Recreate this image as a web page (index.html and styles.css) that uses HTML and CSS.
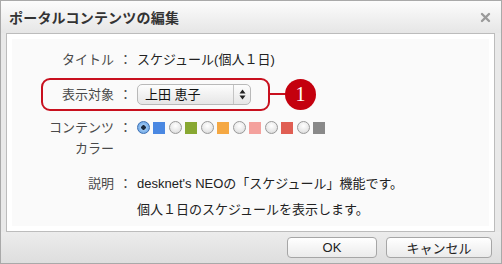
FILE: index.html
```html
<!DOCTYPE html>
<html lang="ja">
<head>
    <meta charset="UTF-8">
    <title>ポータルコンテンツの編集</title>
    <link rel="stylesheet" href="styles.css">
</head>
<body>
    <div class="dialog">
        <div class="dialog_head">
            <h1>ポータルコンテンツの編集</h1>
            <svg class="close_x" width="11" height="11" viewBox="0 0 11 11">
                <path d="M2 2 L9 9 M9 2 L2 9" stroke="#9a9a9a" stroke-width="2.4" stroke-linecap="round"/>
            </svg>
        </div>
        <div class="panel">
            <div class="content">
                <div class="row row_title">
                    <span class="label">タイトル</span>
                    <span class="colon">：</span>
                    <span class="value">スケジュール(個人１日)</span>
                </div>
                <div class="row row_target">
                    <span class="label">表示対象</span>
                    <span class="colon">：</span>
                    <span class="value">
                        <span class="select">
                            <span class="select_text">上田 恵子</span>
                            <span class="select_arrows">
                                <svg width="7" height="11" viewBox="0 0 7 11">
                                    <path d="M3.5 0.5 L6.5 4.5 L0.5 4.5 Z M3.5 10.5 L6.5 6.5 L0.5 6.5 Z" fill="#222"/>
                                </svg>
                            </span>
                        </span>
                    </span>
                    <span class="highlight"></span>
                    <span class="connector"></span>
                    <span class="badge">1</span>
                </div>
                <div class="row row_colors">
                    <span class="label">コンテンツ<br>カラー</span>
                    <span class="colon">：</span>
                    <span class="value colors">
                        <span class="radio checked"></span><span class="swatch" style="background:#4a88e2"></span>
                        <span class="radio"></span><span class="swatch" style="background:#88a832"></span>
                        <span class="radio"></span><span class="swatch" style="background:#f5a843"></span>
                        <span class="radio"></span><span class="swatch" style="background:#f4a19d"></span>
                        <span class="radio"></span><span class="swatch" style="background:#e05e53"></span>
                        <span class="radio"></span><span class="swatch" style="background:#898989"></span>
                    </span>
                </div>
                <div class="row row_desc">
                    <span class="label">説明</span>
                    <span class="colon">：</span>
                    <span class="value">desknet's NEOの「スケジュール」機能です。<br>個人１日のスケジュールを表示します。</span>
                </div>
            </div>
        </div>
        <div class="dialog_foot">
            <button class="btn btn_ok">OK</button>
            <button class="btn btn_cancel">キャンセル</button>
        </div>
    </div>
</body>
</html>
```

FILE: styles.css
```css
html, body {
    margin: 0;
    padding: 0;
    background: #fff;
}
body {
    font-family: "Liberation Sans", "Noto Sans CJK JP", sans-serif;
    font-size: 13px;
    color: #222;
}
.dialog {
    box-sizing: border-box;
    width: 502px;
    height: 264px;
    border: 1px solid #a9a9a9;
    background: #e9e9e9;
    display: flex;
    flex-direction: column;
}
.dialog_head {
    position: relative;
    height: 32px;
    background: linear-gradient(#fcfcfc, #e6e6e6);
    display: flex;
    align-items: center;
    padding-left: 8px;
}
.dialog_head h1 {
    margin: 0;
    font-size: 14px;
    font-weight: bold;
    color: #333;
    letter-spacing: 0.2px;
}
.close_x {
    position: absolute;
    right: 10px;
    top: 11px;
}
.panel {
    margin: 0 6px 0 5px;
    height: 199px;
    box-sizing: border-box;
    border: 1px solid #bcbcbc;
    background: #fff;
    padding: 5px;
}
.content {
    background: #fafafa;
    height: 100%;
    padding-top: 11px;
    box-sizing: border-box;
}
.row {
    display: grid;
    grid-template-columns: 102px 23px 1fr;
    align-items: start;
    line-height: 20px;
}
.label {
    text-align: right;
    color: #4a4a4a;
}
.colon {
    text-align: center;
    color: #4a4a4a;
}
.value {
    color: #222;
}
.row_target {
    position: relative;
    margin-top: 8px;
    height: 33px;
    align-items: center;
}
.select {
    box-sizing: border-box;
    display: flex;
    width: 114px;
    height: 21px;
    border: 1px solid #b9b9b9;
    border-radius: 5px;
    background: linear-gradient(#fdfdfd, #e6e6e6);
    line-height: 19px;
}
.select_text {
    flex: 1;
    padding-left: 7px;
    color: #111;
}
.select_arrows {
    width: 16px;
    border-left: 1px solid #c4c4c4;
    display: flex;
    align-items: center;
    justify-content: center;
}
.highlight {
    position: absolute;
    left: 29px;
    top: 0;
    width: 229px;
    height: 33px;
    box-sizing: border-box;
    border: 2px solid #c8101e;
    border-radius: 9px;
}
.connector {
    position: absolute;
    left: 258px;
    top: 15px;
    width: 16px;
    height: 2px;
    background: #c8101e;
}
.badge {
    position: absolute;
    left: 273px;
    top: 1px;
    width: 31px;
    height: 31px;
    border-radius: 50%;
    background: #c4000e;
    color: #fff;
    font-family: "Liberation Serif", serif;
    font-size: 20px;
    line-height: 31px;
    text-align: center;
}
.row_colors {
    margin-top: 6px;
    line-height: 21px;
}
.colors {
    display: flex;
    align-items: center;
    height: 21px;
}
.radio {
    box-sizing: border-box;
    width: 13px;
    height: 13px;
    border-radius: 50%;
    border: 1px solid #999;
    background: radial-gradient(circle at 50% 35%, #ffffff 0%, #e8e8e8 60%, #cfcfcf 100%);
    margin-right: 3px;
}
.radio.checked {
    border-color: #3c6fb3;
    background: radial-gradient(circle, #1a2a40 0 2px, #9cc6f2 2.5px, #5a9ae0 100%);
}
.swatch {
    width: 12px;
    height: 12px;
    margin-right: 4px;
}
.row_desc {
    margin-top: 12px;
    line-height: 26px;
}
.dialog_foot {
    flex: 1;
    background: linear-gradient(#ececec, #dedede);
    display: flex;
    justify-content: flex-end;
    align-items: flex-start;
    padding: 5px 9px 0 0;
    gap: 9px;
}
.btn {
    height: 21px;
    border: 1px solid #a6a6a6;
    border-radius: 4px;
    background: linear-gradient(#ffffff, #ebebeb);
    font-family: "Liberation Sans", "Noto Sans CJK JP", sans-serif;
    font-size: 13px;
    color: #222;
    padding: 0;
}
.btn_ok {
    width: 90px;
}
.btn_cancel {
    width: 106px;
}
```
